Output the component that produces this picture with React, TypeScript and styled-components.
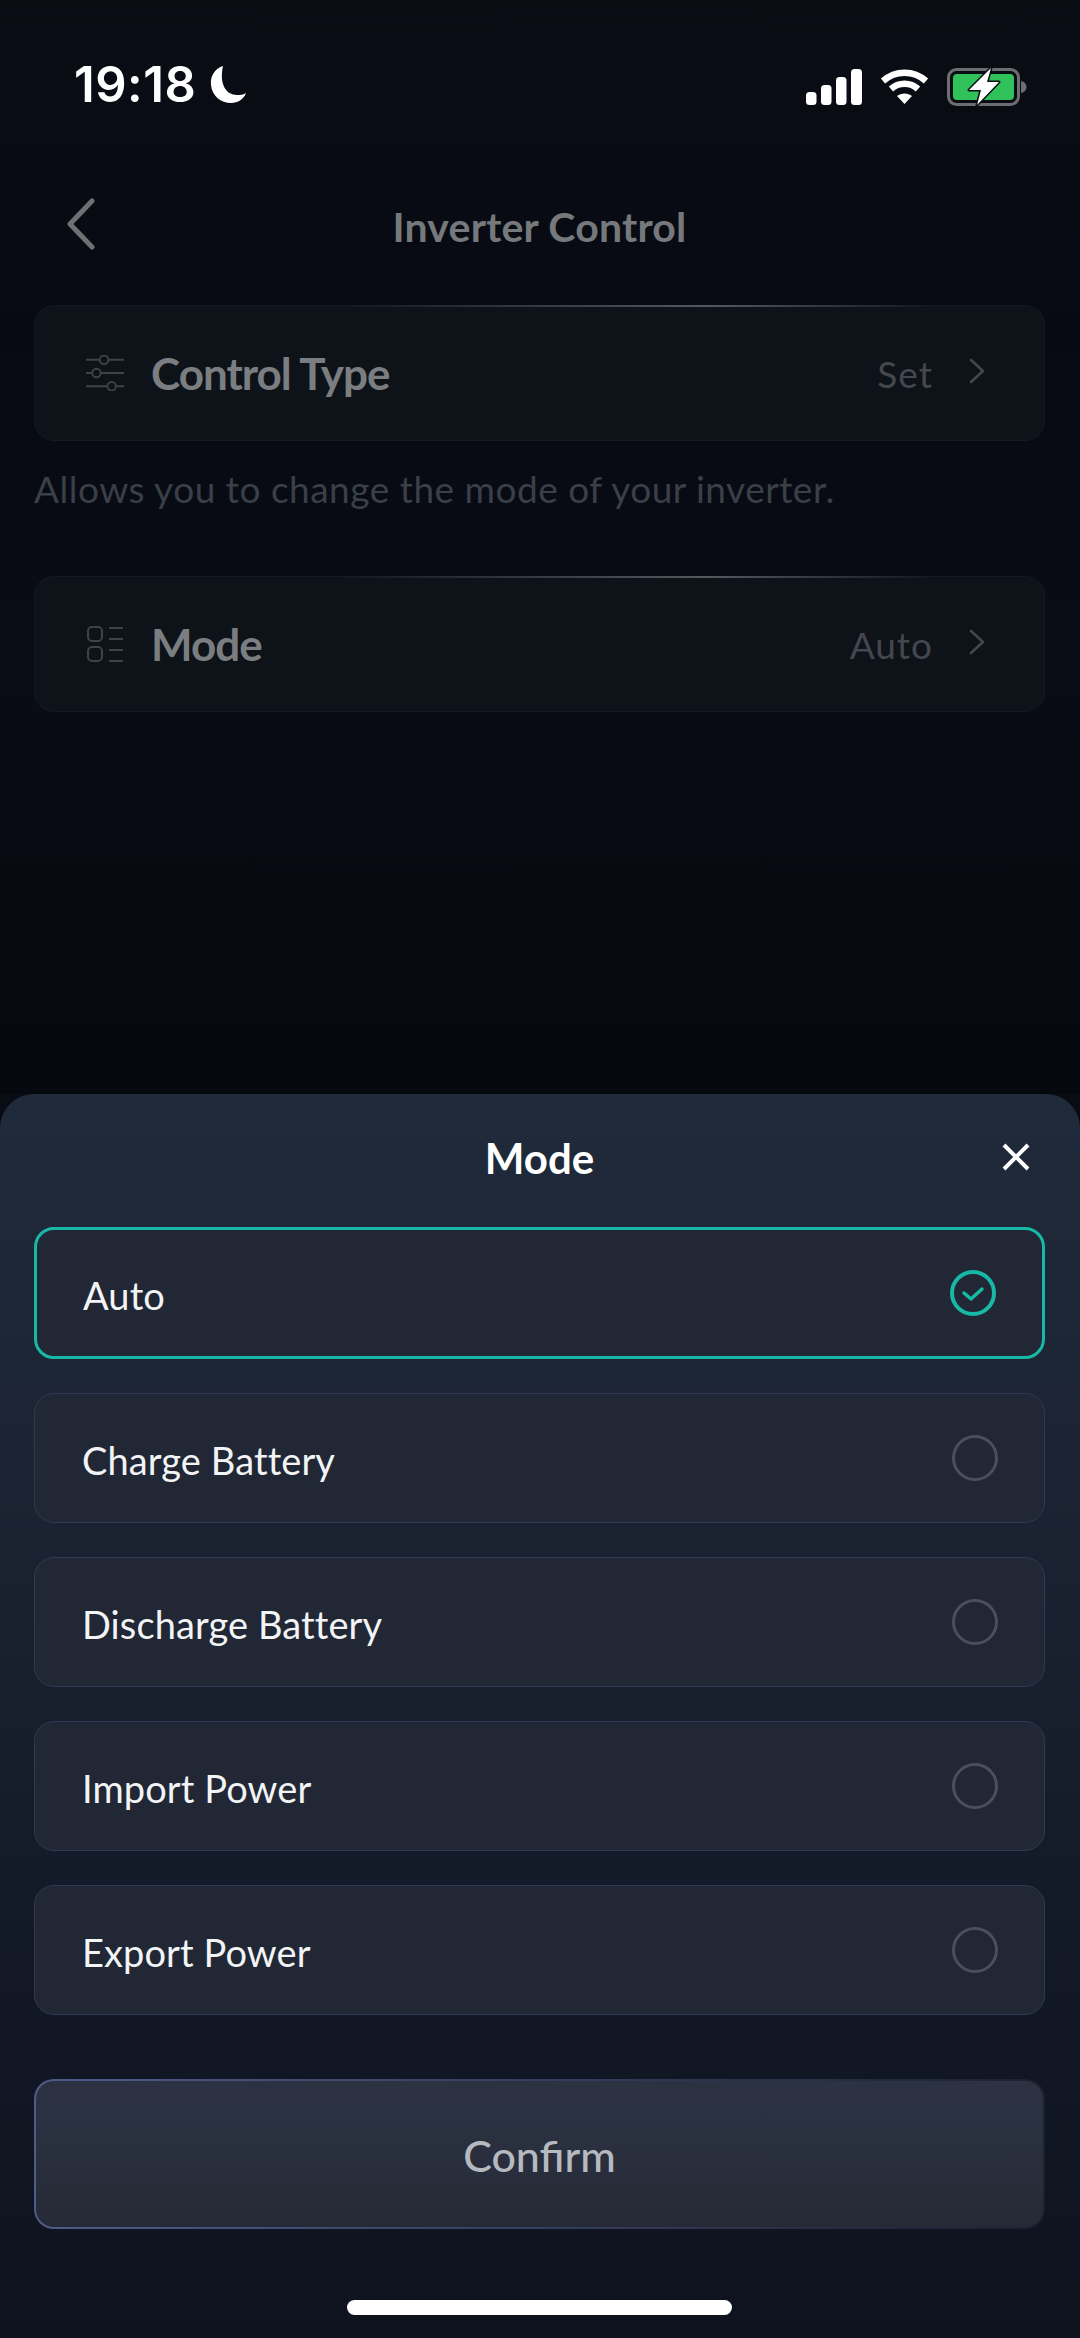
import React from "react";
import styled, { createGlobalStyle } from "styled-components";

const Global = createGlobalStyle`
  html, body { margin: 0; padding: 0; background: #090c13; }
  * { box-sizing: border-box; }
`;

const Screen = styled.div`
  width: 1080px;
  height: 2338px;
  display: flex;
  flex-direction: column;
  overflow: hidden;
  background: #090c13;
  font-family: "Lato", "Noto Sans", sans-serif;
`;

const Backdrop = styled.div`
  flex: 1;
  display: flex;
  flex-direction: column;
  padding: 0 35px 0 34px;
  background: linear-gradient(180deg, #0a0d14 0%, #070a12 30%, #090c14 60%, #05080e 100%);
`;

const StatusBar = styled.div`
  height: 170px;
  display: flex;
  justify-content: space-between;
  align-items: flex-start;
  padding: 57px 18px 0 40px;
`;

const TimeGroup = styled.div`
  display: flex;
  align-items: center;
  gap: 13px;
`;

const Time = styled.span`
  font-family: "Inter", sans-serif;
  font-weight: 600;
  font-size: 49px;
  line-height: 56px;
  letter-spacing: 0.5px;
  color: #fff;
`;

const StatusIcons = styled.div`
  display: flex;
  align-items: center;
  gap: 18px;
  margin: 9px 0 0;
`;

const NavBar = styled.div`
  height: 135px;
  display: flex;
  align-items: flex-start;
  justify-content: center;
  position: relative;
`;

const BackIcon = styled.svg`
  position: absolute;
  left: 31px;
  top: 28px;
`;

const Title = styled.h1`
  margin: 32px 0 0;
  font-size: 41px;
  line-height: 50px;
  font-weight: 700;
  letter-spacing: 0.2px;
  color: #76797c;
`;

const Card = styled.div`
  position: relative;
  height: 136px;
  display: flex;
  align-items: center;
  padding: 0 59px 0 51px;
  border: 1.5px solid #141a25;
  border-radius: 20px;
  background: #0e1219;
  &::before {
    content: "";
    position: absolute;
    top: -1.5px;
    left: 300px;
    width: 600px;
    height: 2px;
    background: linear-gradient(90deg, transparent, #55585f 62%, transparent);
  }
`;

const IconSlot = styled.span`
  width: 38px;
  display: flex;
  justify-content: center;
`;

const CardLabel = styled.span`
  margin-left: 27px;
  font-size: 44px;
  font-weight: 700;
  letter-spacing: -1px;
  color: #7b7e81;
  flex: 1;
`;

const CardValue = styled.span`
  font-size: 37px;
  color: #44474d;
  letter-spacing: 1px;
`;

const CardChevron = styled.svg`
  margin-left: 36px;
  margin-top: -4px;
`;

const Hint = styled.p`
  margin: 25px 0 64px;
  height: 46px;
  font-size: 37px;
  line-height: 46px;
  letter-spacing: 0.5px;
  color: #3a3f48;
  white-space: nowrap;
`;

const Sheet = styled.div`
  height: 1244px;
  display: flex;
  flex-direction: column;
  padding: 0 35px 0 34px;
  border-radius: 34px 34px 0 0;
  background: linear-gradient(180deg, #1f2a3a 0%, #1c2433 30%, #121826 70%, #0e131e 100%);
`;

const SheetHeader = styled.div`
  position: relative;
  height: 133px;
  display: flex;
  justify-content: center;
  align-items: flex-start;
`;

const SheetTitle = styled.h2`
  margin: 36px 0 0;
  font-size: 42px;
  line-height: 56px;
  font-weight: 700;
  color: #fff;
`;

const CloseIcon = styled.svg`
  position: absolute;
  right: 15px;
  top: 49px;
`;

const OptionList = styled.div`
  display: flex;
  flex-direction: column;
  gap: 34px;
`;

const Option = styled.div<{ $active?: boolean }>`
  height: ${(p) => (p.$active ? "132px" : "130px")};
  display: flex;
  align-items: center;
  justify-content: space-between;
  padding: 0 46px 0 ${(p) => (p.$active ? "46px" : "47px")};
  border: ${(p) => (p.$active ? "3px solid #17b9a6" : "1.5px solid #323853")};
  border-radius: 20px;
  background: #212734;
`;

const OptionLabel = styled.span`
  font-size: 38px;
  line-height: 48px;
  letter-spacing: 0.1px;
  color: #f2f4f6;
  margin-top: 4px;
`;

const Radio = styled.span`
  width: 46px;
  height: 46px;
  border-radius: 50%;
  border: 3px solid #4a4f5e;
`;

const ConfirmButton = styled.button`
  height: 150px;
  margin-top: 64px;
  padding-top: 3px;
  border: 2.5px solid transparent;
  border-radius: 20px;
  font-family: inherit;
  font-size: 43px;
  font-weight: 500;
  color: #b6bac0;
  background:
    linear-gradient(180deg, #2d3242 0%, #2a3140 30%, #262a36 100%) padding-box,
    linear-gradient(90deg, #4f5c8a 0%, #3a4468 40%, #1c2130 100%) border-box;
`;

const HomeBar = styled.div`
  width: 385px;
  height: 15px;
  margin: 71px auto 0;
  border-radius: 8px;
  background: #fff;
`;

const options = ["Charge Battery", "Discharge Battery", "Import Power", "Export Power"];

const Chevron = () => (
  <CardChevron width="16" height="26" viewBox="0 0 16 26" fill="none">
    <path d="M2 2l12 11L2 24" stroke="#44474d" strokeWidth="2.6" strokeLinecap="round" strokeLinejoin="round" />
  </CardChevron>
);

export default function App() {
  return (
    <Screen>
      <Global />
      <Backdrop>
        <StatusBar>
          <TimeGroup>
            <Time>19:18</Time>
            <svg width="38" height="40" viewBox="0 0 38 40">
              <path d="M14 1C5 4 1 12 2 20c1 11 10 18 20 18 7 0 13-4 15-10-3 2-6 2-9 2C17 30 10 19 14 1z" fill="#fff" />
            </svg>
          </TimeGroup>
          <StatusIcons>
            <svg width="56" height="36" viewBox="0 0 56 36" fill="#fff">
              <rect x="0" y="23" width="10.500" height="13" rx="3.500" />
              <rect x="15" y="16" width="10.500" height="20" rx="3.500" />
              <rect x="30" y="8" width="10.500" height="28" rx="3.500" />
              <rect x="45" y="0" width="11" height="36" rx="3.500" />
            </svg>
            <svg width="49" height="36" viewBox="0 0 48 36" fill="none" stroke="#fff" strokeWidth="6.500">
              <path d="M2.500 12C15 1 33 1 45.500 12" />
              <path d="M10.500 20C18 13 30 13 37.500 20" />
              <path d="M24 35l-7.500-8c4-3.500 11-3.500 15 0z" fill="#fff" stroke="none" />
            </svg>
            <svg width="80" height="42" viewBox="0 0 80 42">
              <rect x="1.500" y="3.500" width="70" height="35" rx="8" fill="none" stroke="#6c6e72" strokeWidth="3" />
              <rect x="6" y="8" width="61" height="26" rx="4" fill="#30c15a" />
              <path d="M74 15c3 .5 5.500 3 5.500 6s-2.500 5.500-5.500 6z" fill="#6c6e72" />
              <path d="M44 2L22 24h12l-4 15 22-23H40z" fill="#fff" stroke="#0a0d14" strokeWidth="3" strokeLinejoin="round" paintOrder="stroke" />
            </svg>
          </StatusIcons>
        </StatusBar>
        <NavBar>
          <BackIcon width="32" height="56" viewBox="0 0 32 56" fill="none">
            <path d="M27 3L5 26l22 23" stroke="#6e7173" strokeWidth="5" strokeLinecap="round" strokeLinejoin="round" />
          </BackIcon>
          <Title>Inverter Control</Title>
        </NavBar>
        <Card>
          <IconSlot>
            <svg width="38" height="36" viewBox="0 0 40 36" fill="none" stroke="#3f4248" strokeWidth="2">
              <path d="M0 4h14M24 4h16M0 18h6M16 18h24M0 32h22M32 32h8" />
              <circle cx="19" cy="4" r="4.500" />
              <circle cx="11" cy="18" r="4.500" />
              <circle cx="27" cy="32" r="4.500" />
            </svg>
          </IconSlot>
          <CardLabel>Control Type</CardLabel>
          <CardValue>Set</CardValue>
          <Chevron />
        </Card>
        <Hint>Allows you to change the mode of your inverter.</Hint>
        <Card>
          <IconSlot>
            <svg width="36" height="36" viewBox="0 0 36 36" fill="none" stroke="#3f4248" strokeWidth="2">
              <rect x="1" y="1" width="14" height="14" rx="4" />
              <rect x="1" y="21" width="14" height="14" rx="4" />
              <path d="M22 2h14M22 13h14M22 24h14M22 35h14" />
            </svg>
          </IconSlot>
          <CardLabel>Mode</CardLabel>
          <CardValue>Auto</CardValue>
          <Chevron />
        </Card>
      </Backdrop>
      <Sheet>
        <SheetHeader>
          <SheetTitle>Mode</SheetTitle>
          <CloseIcon width="28" height="28" viewBox="0 0 28 28" fill="none">
            <path d="M2 2l24 24M26 2L2 26" stroke="#fff" strokeWidth="4" />
          </CloseIcon>
        </SheetHeader>
        <OptionList>
          <Option $active>
            <OptionLabel>Auto</OptionLabel>
            <svg width="46" height="46" viewBox="0 0 46 46" fill="none" stroke="#17b9a6">
              <circle cx="23" cy="23" r="21" strokeWidth="4" />
              <path d="M14 23l7 6 11-10" strokeWidth="3.500" strokeLinecap="round" strokeLinejoin="round" />
            </svg>
          </Option>
          {options.map((o) => (
            <Option key={o}>
              <OptionLabel>{o}</OptionLabel>
              <Radio />
            </Option>
          ))}
        </OptionList>
        <ConfirmButton>Confirm</ConfirmButton>
        <HomeBar />
      </Sheet>
    </Screen>
  );
}
